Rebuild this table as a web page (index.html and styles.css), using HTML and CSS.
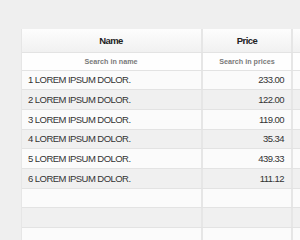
FILE: index.html
```html
<!DOCTYPE html>
<html>
<head>
<meta charset="utf-8">
<link rel="stylesheet" href="styles.css">
</head>
<body>
<div class="grid">
  <div class="row head">
    <div class="cell c-name">Name</div>
    <div class="cell c-price">Price</div>
    <div class="cell c-extra"></div>
  </div>
  <div class="row search">
    <div class="cell c-name">Search in name</div>
    <div class="cell c-price">Search in prices</div>
    <div class="cell c-extra"></div>
  </div>
  <div class="row odd"><div class="cell c-name">1 LOREM IPSUM DOLOR.</div><div class="cell c-price num">233.00</div><div class="cell c-extra"></div></div>
  <div class="row even"><div class="cell c-name">2 LOREM IPSUM DOLOR.</div><div class="cell c-price num">122.00</div><div class="cell c-extra"></div></div>
  <div class="row odd"><div class="cell c-name">3 LOREM IPSUM DOLOR.</div><div class="cell c-price num">119.00</div><div class="cell c-extra"></div></div>
  <div class="row even"><div class="cell c-name">4 LOREM IPSUM DOLOR.</div><div class="cell c-price num">35.34</div><div class="cell c-extra"></div></div>
  <div class="row odd"><div class="cell c-name">5 LOREM IPSUM DOLOR.</div><div class="cell c-price num">439.33</div><div class="cell c-extra"></div></div>
  <div class="row even"><div class="cell c-name">6 LOREM IPSUM DOLOR.</div><div class="cell c-price num">111.12</div><div class="cell c-extra"></div></div>
  <div class="row odd"><div class="cell c-name"></div><div class="cell c-price"></div><div class="cell c-extra"></div></div>
  <div class="row even"><div class="cell c-name"></div><div class="cell c-price"></div><div class="cell c-extra"></div></div>
  <div class="row odd"><div class="cell c-name"></div><div class="cell c-price"></div><div class="cell c-extra"></div></div>
</div>
</body>
</html>
```
FILE: styles.css
```css
html, body {
  margin: 0;
  padding: 0;
  background: #efefef;
  overflow: hidden;
}
body {
  font-family: "Liberation Sans", Arial, sans-serif;
  color: #333;
}
.grid {
  margin: 29px 0 0 21px;
  display: flex;
  flex-direction: column;
  width: 279px;
  overflow: hidden;
  border-left: 1px solid #e6e6e6;
  box-sizing: border-box;
}
.row {
  display: grid;
  grid-template-columns: 181px 90px 1fr;
  height: 19.7px;
  border-bottom: 1px solid #e3e3e3;
  box-sizing: border-box;
}
.cell {
  display: flex;
  align-items: center;
  padding: 0 7px;
  font-size: 9.5px;
  letter-spacing: -0.55px;
  white-space: nowrap;
  overflow: hidden;
  border-right: 2px solid #e6e6e6;
}
.cell.c-name { padding-left: 6px; }
.cell.c-extra { border-right: 0; }
.head {
  height: 24px;
  background: linear-gradient(#fdfdfd, #f1f1f1);
}
.head .cell {
  justify-content: center;
  font-weight: bold;
  color: #222;
}
.search {
  height: 17.5px;
  background: #fefefe;
}
.search .cell {
  justify-content: center;
  font-weight: bold;
  font-size: 7.2px;
  letter-spacing: 0;
  color: #7a7a7a;
}
.odd { background: #fbfbfb; }
.even { background: #f0f0f0; }
.num { justify-content: flex-end; }
```
